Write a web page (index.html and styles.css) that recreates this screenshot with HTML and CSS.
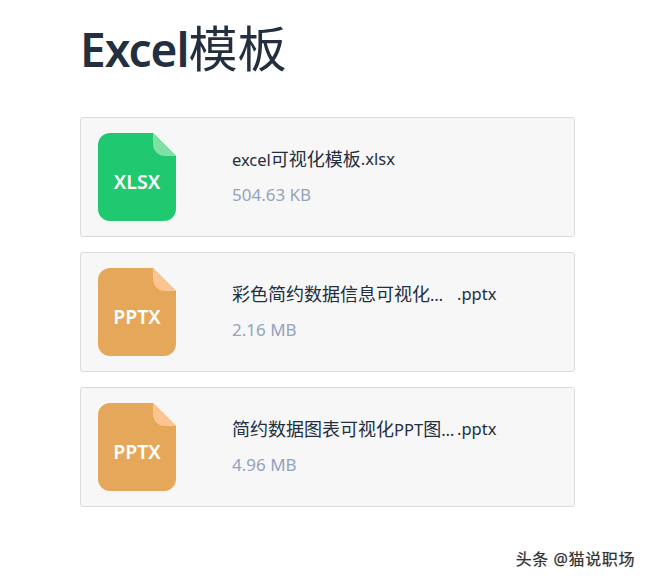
FILE: index.html
```html
<!DOCTYPE html>
<html lang="zh-CN">
<head>
    <meta charset="UTF-8">
    <meta name="viewport" content="width=device-width, initial-scale=1.0">
    <title>Excel模板</title>
    <link rel="stylesheet" href="styles.css">
</head>
<body>
    <div class="page">
        <h1 class="title"><span class="title-latin">Excel</span>模板</h1>

        <div class="file-card">
            <svg class="file-icon" viewBox="0 0 78 88">
                <path class="body-xlsx" d="M12 0H55L78 23V76A12 12 0 0 1 66 88H12A12 12 0 0 1 0 76V12A12 12 0 0 1 12 0Z"/>
                <path class="fold-xlsx" d="M55 0L78 23H67A12 12 0 0 1 55 11Z"/>
                <text class="file-ext" x="39" y="56">XLSX</text>
            </svg>
            <div class="file-info">
                <div class="file-name"><span>excel<span class="cjk">可视化模板</span></span><span>.xlsx</span></div>
                <div class="file-size">504.63 KB</div>
            </div>
        </div>

        <div class="file-card">
            <svg class="file-icon" viewBox="0 0 78 88">
                <path class="body-pptx" d="M12 0H55L78 23V76A12 12 0 0 1 66 88H12A12 12 0 0 1 0 76V12A12 12 0 0 1 12 0Z"/>
                <path class="fold-pptx" d="M55 0L78 23H67A12 12 0 0 1 55 11Z"/>
                <text class="file-ext" x="39" y="56">PPTX</text>
            </svg>
            <div class="file-info">
                <div class="file-name"><span class="name-cut"><span class="cjk">彩色简约数据信息可视化</span>…</span><span>.pptx</span></div>
                <div class="file-size">2.16 MB</div>
            </div>
        </div>

        <div class="file-card">
            <svg class="file-icon" viewBox="0 0 78 88">
                <path class="body-pptx" d="M12 0H55L78 23V76A12 12 0 0 1 66 88H12A12 12 0 0 1 0 76V12A12 12 0 0 1 12 0Z"/>
                <path class="fold-pptx" d="M55 0L78 23H67A12 12 0 0 1 55 11Z"/>
                <text class="file-ext" x="39" y="56">PPTX</text>
            </svg>
            <div class="file-info">
                <div class="file-name"><span class="name-cut"><span class="cjk">简约数据图表可视化</span>PPT<span class="cjk">图</span>…</span><span>.pptx</span></div>
                <div class="file-size">4.96 MB</div>
            </div>
        </div>
    </div>
    <div class="watermark">头条 @猫说职场</div>
</body>
</html>
```

FILE: styles.css
```css
html, body {
    height: 100%;
}
body {
    margin: 0;
    background: #ffffff;
    font-family: "Noto Sans", "Noto Sans CJK SC", sans-serif;
    color: #2d3748;
    overflow: hidden;
}
.page {
    width: 495px;
    margin-left: 80px;
}
.title {
    margin: 0;
    padding-top: 16px;
    height: 117px;
    box-sizing: border-box;
    font-size: 49px;
    line-height: 64px;
    font-weight: 400;
    color: #232f3e;
}
.title-latin {
    font-size: 46px;
    font-weight: 600;
    letter-spacing: -1px;
}
.file-card {
    display: flex;
    align-items: center;
    box-sizing: border-box;
    height: 120px;
    margin-bottom: 15px;
    padding-left: 17px;
    background: #f7f7f7;
    border: 1px solid #dcdcdc;
    border-radius: 3px;
}
.file-icon {
    width: 78px;
    height: 88px;
    flex-shrink: 0;
}
.body-xlsx { fill: #20c96f; }
.fold-xlsx { fill: #7fdfa4; }
.body-pptx { fill: #e5a85b; }
.fold-pptx { fill: #fcc48e; }
.file-ext {
    fill: #ffffff;
    font-size: 19.5px;
    font-weight: 600;
    text-anchor: middle;
}
.file-info {
    margin-left: 56px;
    padding-bottom: 1px;
}
.file-name {
    display: flex;
    font-size: 16.5px;
    line-height: 24px;
    color: #232f3e;
}
.cjk {
    font-size: 18px;
}
.name-cut {
    display: block;
    width: 225px;
    white-space: nowrap;
}
.file-size {
    margin-top: 11px;
    font-size: 17px;
    line-height: 24px;
    color: #95a3bc;
}
.watermark {
    position: absolute;
    right: 14px;
    bottom: 12px;
    font-size: 16px;
    line-height: 22px;
    letter-spacing: 0.6px;
    color: #333333;
    text-shadow: 0 0 1px rgba(0, 0, 0, 0.4);
}
```
